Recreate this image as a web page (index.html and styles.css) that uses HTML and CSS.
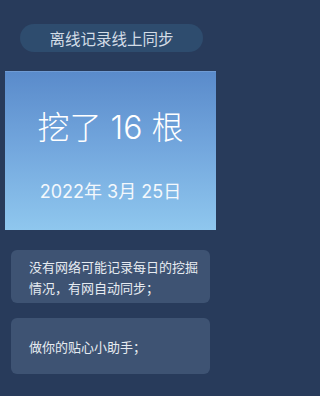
FILE: index.html
```html
<!DOCTYPE html>
<html lang="zh">
<head>
<meta charset="utf-8">
<link rel="stylesheet" href="styles.css">
</head>
<body>
<div class="page">
  <div class="pill">离线记录线上同步</div>
  <div class="hero">
    <div class="hero-title">挖了 16 根</div>
    <div class="hero-date">2022年 3月 25日</div>
  </div>
  <div class="card card-first">没有网络可能记录每日的挖掘情况，有网自动同步；</div>
  <div class="card card-second">做你的贴心小助手；</div>
</div>
</body>
</html>
```
FILE: styles.css
```css
html, body {
  margin: 0;
  padding: 0;
  background: #283b5b;
}
.page {
  width: 221px;
  height: 396px;
  display: flex;
  flex-direction: column;
  font-family: "Noto Sans CJK SC", "Noto Sans", sans-serif;
  padding-top: 24px;
  box-sizing: border-box;
  overflow: hidden;
}
.pill {
  margin-left: 20px;
  width: 183px;
  height: 28px;
  border-radius: 14px;
  background: #2e4c6e;
  color: #d3dce6;
  font-size: 15.5px;
  line-height: 28px;
  text-align: center;
}
.hero {
  margin-top: 19px;
  margin-left: 5px;
  width: 211px;
  height: 159px;
  box-sizing: border-box;
  background: linear-gradient(180deg, #5a8bcb 0%, #74a8de 50%, #8fc7ee 100%);
  border-top: 1px solid #6f9bd4;
  display: flex;
  flex-direction: column;
  align-items: center;
  padding-top: 36px;
  color: #ffffff;
  font-family: "Inter", "Noto Sans CJK SC", sans-serif;
}
.hero-title {
  font-size: 32px;
  line-height: 40px;
  font-weight: 300;
}
.hero-date {
  margin-top: 32px;
  font-size: 18px;
  line-height: 24px;
  font-weight: 400;
  color: #f4f8fc;
}
.card {
  margin-left: 11px;
  width: 199px;
  box-sizing: border-box;
  background: #3e5373;
  border-radius: 6px;
  color: #e6ebf1;
  font-size: 13px;
  line-height: 21px;
  padding-left: 18px;
  padding-right: 10px;
}
.card-first {
  margin-top: 20px;
  height: 53px;
  padding-top: 6px;
}
.card-second {
  margin-top: 15px;
  height: 56px;
  display: flex;
  align-items: center;
}
```
